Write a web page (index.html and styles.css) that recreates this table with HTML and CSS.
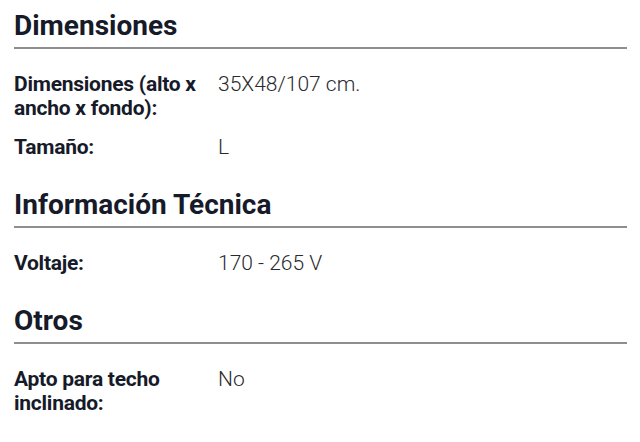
FILE: index.html
```html
<!DOCTYPE html>
<html lang="es">
<head>
<meta charset="utf-8">
<link rel="stylesheet" href="styles.css">
</head>
<body>
<div class="specs">
  <section class="group">
    <h2 class="group-title">Dimensiones</h2>
    <div class="rows">
      <div class="label">Dimensiones (alto x ancho x fondo):</div>
      <div class="value">35X48/107 cm.</div>
      <div class="label">Tamaño:</div>
      <div class="value">L</div>
    </div>
  </section>
  <section class="group">
    <h2 class="group-title">Información Técnica</h2>
    <div class="rows">
      <div class="label">Voltaje:</div>
      <div class="value">170 - 265 V</div>
    </div>
  </section>
  <section class="group">
    <h2 class="group-title">Otros</h2>
    <div class="rows">
      <div class="label">Apto para techo inclinado:</div>
      <div class="value">No</div>
    </div>
  </section>
</div>
</body>
</html>
```
FILE: styles.css
```css
html, body {
  margin: 0;
  padding: 0;
  background: #ffffff;
}
body {
  font-family: Roboto, "Liberation Sans", sans-serif;
  color: #161a29;
}
.specs {
  padding: 10px 13px 0 14px;
}
.group-title {
  margin: 0;
  font-size: 28px;
  line-height: 32px;
  font-weight: 700;
  letter-spacing: 0;
  padding-bottom: 5px;
  border-bottom: 2px solid #8e8e8e;
}
.rows {
  display: grid;
  grid-template-columns: 204px 1fr;
  row-gap: 15px;
  margin-top: 23px;
  margin-bottom: 30px;
}
.label {
  font-size: 21px;
  line-height: 24px;
  font-weight: 700;
  letter-spacing: -0.25px;
  max-width: 196px;
}
.value {
  font-size: 21px;
  line-height: 24px;
  font-weight: 300;
  color: #2a2a2e;
}
```
